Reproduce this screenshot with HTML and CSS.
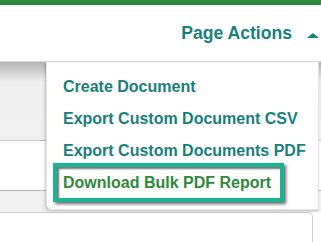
FILE: index.html
```html
<!DOCTYPE html>
<html>
  <head>
    <title>Documents</title>
    <link rel="stylesheet" href="styles.css">
  </head>
  <body>
    <div class="topbar"></div>
    <div class="header">
      <span class="actions-label">Page Actions</span>
      <span class="caret"></span>
    </div>
    <div class="content">
      <div class="toolbar"></div>
      <div class="filter"></div>
      <div class="strip"></div>
      <div class="panel"></div>

      <div class="dropdown">
        <a class="item" href="#">Create Document</a>
        <a class="item" href="#">Export Custom Document CSV</a>
        <a class="item" href="#">Export Custom Documents PDF</a>
        <a class="item focused" href="#">Download Bulk PDF Report</a>
      </div>
    </div>
  </body>
</html>
```

FILE: styles.css
```css
body {
  margin: 0;
  font-family: "Liberation Sans", Arial, sans-serif;
  font-weight: bold;
  background: #fff;
  overflow: hidden;
}
.topbar {
  height: 5px;
  background-color: #2e8a3a;
}
.header {
  height: 56px;
  display: flex;
  align-items: center;
  justify-content: flex-end;
  padding-right: 2px;
  border-bottom: 1px solid #d9d9d9;
}
.actions-label {
  font-size: 17.6px;
  line-height: 20px;
  color: #17807e;
}
.caret {
  width: 0;
  height: 0;
  margin-left: 15px;
  margin-top: 4px;
  border-left: 6px solid transparent;
  border-right: 6px solid transparent;
  border-bottom: 5px solid #17807e;
}
.content {
  position: relative;
}
.toolbar {
  height: 78px;
  background: linear-gradient(#b3b3b3, #eeeeee 20px, #f0f0f0);
  border-bottom: 1px solid #c6c6c6;
}
.filter {
  height: 49px;
  background: #fff;
  border-bottom: 1px solid #b4b4b4;
}
.strip {
  height: 21px;
  background: #f0f0f0;
}
.panel {
  height: 40px;
  margin-right: 8px;
  border-top: 1px solid #cfcfcf;
  border-right: 1px solid #cfcfcf;
  border-top-right-radius: 5px;
  background: #fff;
}
.dropdown {
  position: absolute;
  top: 0;
  left: 46px;
  right: 2px;
  padding: 9px 0 7px 0;
  background: #fff;
  border: 1px solid #e3e3e3;
  border-top: none;
  border-bottom-left-radius: 6px;
  box-shadow: -1px 1px 3px rgba(0, 0, 0, 0.22);
}
.item {
  display: block;
  padding: 6px 0 6px 16px;
  font-size: 16px;
  line-height: 20px;
  color: #17807e;
  text-decoration: none;
  white-space: nowrap;
}
.focused {
  margin: -4px 34px 0 6px;
  padding: 6px 10px 5px 6px;
  border: 4px solid #1ab394;
  color: #2e8a3a;
  box-shadow: inset 2px 2px 2px rgba(0, 0, 0, 0.55), 2px 2px 3px rgba(0, 0, 0, 0.6);
}
```
